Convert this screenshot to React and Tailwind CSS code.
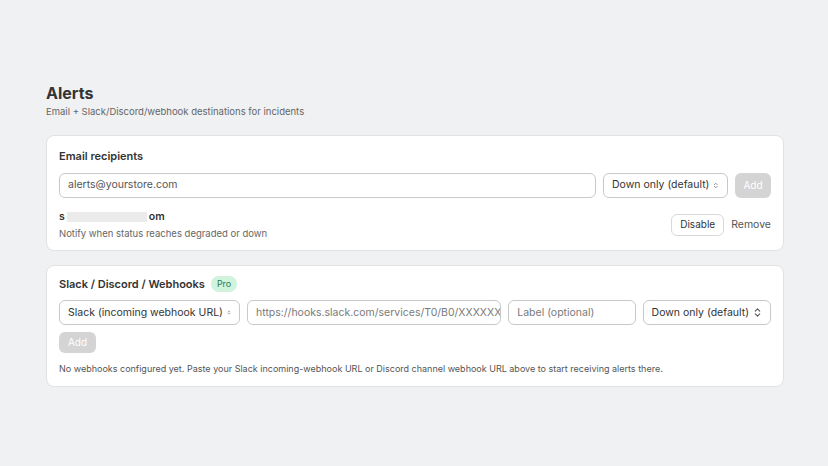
function Chevrons() {
  return (
    <svg width="9" height="11" viewBox="0 0 10 12" fill="none" stroke="#555" strokeWidth="1.2" strokeLinecap="round" strokeLinejoin="round">
      <path d="M2.5 4.5 5 2l2.5 2.5M2.5 7.5 5 10l2.5-2.5" />
    </svg>
  );
}

function Select({ label, className = '' }) {
  return (
    <div className={`h-[25px] flex items-center justify-between gap-1 px-2 border border-[#c9c9c9] rounded-md bg-white text-[10.5px] text-[#333] whitespace-nowrap ${className}`}>
      <span>{label}</span>
      <Chevrons />
    </div>
  );
}

function Input({ placeholder, className = '', light }) {
  return (
    <div className={`h-[25px] flex items-center px-2 border border-[#c9c9c9] rounded-md bg-white text-[10.5px] whitespace-nowrap overflow-hidden ${light ? 'text-[#7a7a7a]' : 'text-[#555]'} ${className}`}>
      {placeholder}
    </div>
  );
}

export default function App() {
  return (
    <div className="w-[828px] h-[466px] bg-[#f0f1f3] pt-[83px] pl-[46px] pr-[44px]" style={{ fontFamily: 'Inter, "Liberation Sans", sans-serif' }}>
      <h1 className="text-[16px] font-bold text-[#333] leading-5">Alerts</h1>
      <p className="text-[9.5px] text-[#666] mt-[2px]">Email + Slack/Discord/webhook destinations for incidents</p>

      <div className="mt-[16px] bg-white rounded-lg border border-[#e2e2e2] px-3 pt-3 pb-[9px]">
        <div className="text-[11px] font-semibold text-[#333]">Email recipients</div>
        <div className="flex gap-[7px] mt-[8px]">
          <Input placeholder="alerts@yourstore.com" className="flex-1" />
          <Select label="Down only (default)" className="w-[125px]" />
          <div className="w-[36px] h-[25px] rounded-md bg-[#d4d4d4] text-white text-[10px] flex items-center justify-center">Add</div>
        </div>
        <div className="flex items-center justify-between mt-[11px]">
          <div>
            <div className="flex items-center text-[10.5px] font-semibold text-[#333]">
              s<span className="inline-block w-[80px] h-[10px] mx-[2px] bg-[#ebebeb]" />om
            </div>
            <div className="text-[9.5px] text-[#666] mt-[2px]">Notify when status reaches degraded or down</div>
          </div>
          <div className="flex items-center gap-[7px]">
            <div className="h-[22px] px-2 border border-[#d8d8d8] rounded-md text-[10px] text-[#333] flex items-center">Disable</div>
            <div className="text-[10.5px] text-[#555]">Remove</div>
          </div>
        </div>
      </div>

      <div className="mt-[14px] bg-white rounded-lg border border-[#e2e2e2] px-3 pt-[10px] pb-[10px]">
        <div className="flex items-center gap-[6px]">
          <span className="text-[11px] font-semibold text-[#333]">Slack / Discord / Webhooks</span>
          <span className="text-[9px] px-[6px] py-[1px] rounded-full bg-[#cff3dd] text-[#2f7a4a]">Pro</span>
        </div>
        <div className="flex gap-[7px] mt-[8px]">
          <Select label="Slack (incoming webhook URL)" className="w-[181px]" />
          <Input placeholder="https://hooks.slack.com/services/T0/B0/XXXXXX" className="w-[258px]" light />
          <Input placeholder="Label (optional)" className="w-[129px]" light />
          <Select label="Down only (default)" className="flex-1" />
        </div>
        <div className="w-[37px] h-[21px] mt-[7px] rounded-md bg-[#d4d4d4] text-white text-[10px] flex items-center justify-center">Add</div>
        <p className="text-[9px] text-[#555] mt-[9px]">No webhooks configured yet. Paste your Slack incoming-webhook URL or Discord channel webhook URL above to start receiving alerts there.</p>
      </div>
    </div>
  );
}
